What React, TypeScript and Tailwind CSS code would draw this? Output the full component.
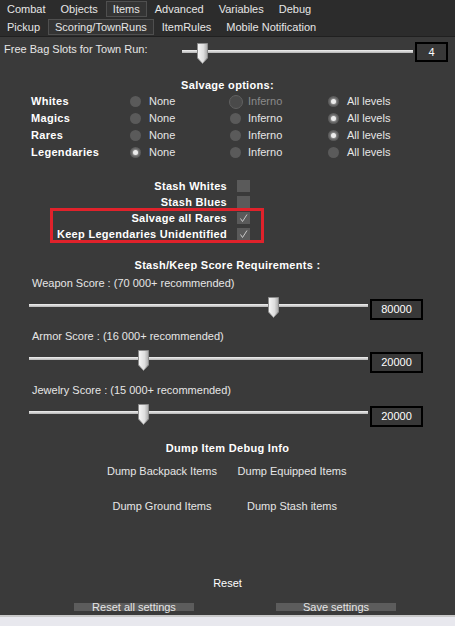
import React from 'react';

const topTabs = ['Combat', 'Objects', 'Items', 'Advanced', 'Variables', 'Debug'];
const subTabs = ['Pickup', 'Scoring/TownRuns', 'ItemRules', 'Mobile Notification'];

const salvageRows = [
    { label: 'Whites', picked: 2, inferno: 'disabled' },
    { label: 'Magics', picked: 2 },
    { label: 'Rares', picked: 2 },
    { label: 'Legendaries', picked: 0 },
];

const Tab = ({ label, active }: { label: string; active?: boolean }) => (
    <div
        className={`flex h-[16px] items-center border px-[6px] ${
            active ? 'border-[#4f4f4f] bg-[#343434]' : 'border-transparent'
        }`}
    >
        {label}
    </div>
);

const Radio = ({ checked, disabled }: { checked?: boolean; disabled?: boolean }) => (
    <div className="flex w-[11px] shrink-0 items-center justify-center">
        {disabled ? (
            <span className="block h-[14px] w-[14px] shrink-0 rounded-full border border-[#606060] bg-[#4a4a4a]" />
        ) : (
            <span className="flex h-[11px] w-[11px] shrink-0 items-center justify-center rounded-full bg-[#5a5a5a]">
                {checked && (
                    <span className="block h-[5px] w-[5px] rounded-full bg-[#ececec] shadow-[0_0_2px_1px_#9a9a9a]" />
                )}
            </span>
        )}
    </div>
);

const Checkbox = ({ checked }: { checked?: boolean }) => (
    <div className="ml-[10px] h-[12px] w-[13px] bg-[#5a5a5a]">
        {checked && (
            <svg width="13" height="12" viewBox="0 0 13 12">
                <path d="M3.5 6.5 L5.5 9.5 L10 2.5" fill="none" stroke="#c8c8c8" strokeWidth="1" />
            </svg>
        )}
    </div>
);

const Thumb = ({ id }: { id: string }) => (
    <svg width="11" height="21" viewBox="0 0 11 21">
        <defs>
            <linearGradient id={id} x1="0" x2="1" y1="0" y2="0">
                <stop offset="0" stopColor="#f6f6f6" />
                <stop offset="0.6" stopColor="#dedede" />
                <stop offset="1" stopColor="#a9a9a9" />
            </linearGradient>
        </defs>
        <path d="M0.5 0.5 H10.5 V15 L5.5 20.5 L0.5 15 Z" fill={`url(#${id})`} stroke="#8c8c8c" />
    </svg>
);

const Track = ({ id, thumb }: { id: string; thumb: number }) => (
    <div className="relative flex h-[21px] w-full flex-col">
        <div className="mt-[7px] h-[3px] w-full bg-gradient-to-b from-[#f2f2f2] to-[#b4b4b4]" />
        <div className="absolute top-0" style={{ left: thumb }}>
            <Thumb id={id} />
        </div>
    </div>
);

const ScoreSlider = ({ id, label, thumb, value }: { id: string; label: string; thumb: number; value: string }) => (
    <>
        <div className="flex h-[16px] items-center pl-[32px]">{label}</div>
        <div className="mt-[5px] flex h-[25px] items-start pl-[29px]">
            <div className="mt-[1px] w-[339px]">
                <Track id={id} thumb={thumb} />
            </div>
            <div className="ml-[2px] mt-[3px] flex h-[21px] w-[53px] items-center justify-center border-2 border-black bg-[#383838] text-white">
                {value}
            </div>
        </div>
    </>
);

const App = () => {
    return (
        <div className="flex h-[626px] w-[455px] flex-col bg-[#3a3a3a] font-['Liberation_Sans',Arial,sans-serif] text-[11px] text-[#e6e6e6]">
            <div className="bg-[#2c2c2c]">
                <div className="flex h-[18px] items-center gap-[1px]">
                    {topTabs.map((t) => (
                        <Tab key={t} label={t} active={t === 'Items'} />
                    ))}
                </div>
                <div className="flex h-[19px] items-center gap-[1px] border-b border-[#202020]">
                    {subTabs.map((t) => (
                        <Tab key={t} label={t} active={t === 'Scoring/TownRuns'} />
                    ))}
                </div>
            </div>

            <div className="flex flex-1 flex-col">
                <div className="mt-[2px] flex h-[28px] items-start">
                    <div className="mt-[4px] w-[182px] pl-[4px] leading-[13px]">Free Bag Slots for Town Run:</div>
                    <div className="mt-[4px] w-[231px]">
                        <Track id="bag" thumb={15} />
                    </div>
                    <div className="ml-[2px] mt-[3px] flex h-[20px] w-[33px] items-center justify-center border-2 border-black bg-[#383838] text-white">
                        4
                    </div>
                </div>

                <div className="mt-[10px] flex h-[16px] items-center justify-center font-bold tracking-[0.3px] text-white">
                    Salvage options:
                </div>
                {salvageRows.map((r) => (
                    <div key={r.label} className="flex h-[17px] items-center">
                        <div className="w-[130px] pl-[31px] font-bold tracking-[0.3px] text-white">{r.label}</div>
                        <div className="flex w-[100px] items-center">
                            <Radio checked={r.picked === 0} />
                            <span className="ml-[8px]">None</span>
                        </div>
                        <div className="flex w-[98px] items-center">
                            <Radio checked={r.picked === 1} disabled={r.inferno === 'disabled'} />
                            <span className={`ml-[7px] ${r.inferno === 'disabled' ? 'text-[#8a8a8a]' : ''}`}>Inferno</span>
                        </div>
                        <div className="flex items-center">
                            <Radio checked={r.picked === 2} />
                            <span className="ml-[8px]">All levels</span>
                        </div>
                    </div>
                ))}

                <div className="relative mt-[17px]">
                    {[
                        ['Stash Whites', false],
                        ['Stash Blues', false],
                        ['Salvage all Rares', true],
                        ['Keep Legendaries Unidentified', true],
                    ].map(([label, checked]) => (
                        <div key={label as string} className="flex h-[16px] items-center">
                            <div className="w-[227px] text-right font-bold tracking-[0.3px] text-white">{label}</div>
                            <Checkbox checked={checked as boolean} />
                        </div>
                    ))}
                    <div className="absolute left-[50px] top-[30px] h-[35px] w-[214px] border-[3px] border-[#e0222b]" />
                </div>

                <div className="mt-[15px] flex h-[16px] items-center justify-center font-bold tracking-[0.3px] text-white">
                    Stash/Keep Score Requirements :
                </div>
                <div className="mt-[2px]">
                    <ScoreSlider id="weapon" label="Weapon Score : (70 000+ recommended)" thumb={239} value="80000" />
                </div>
                <div className="mt-[7px]">
                    <ScoreSlider id="armor" label="Armor Score : (16 000+ recommended)" thumb={109} value="20000" />
                </div>
                <div className="mt-[8px]">
                    <ScoreSlider id="jewelry" label="Jewelry Score : (15 000+ recommended)" thumb={109} value="20000" />
                </div>

                <div className="mt-[12px] flex h-[16px] items-center justify-center font-bold tracking-[0.3px] text-white">
                    Dump Item Debug Info
                </div>
                <div className="ml-[102px] mt-[7px] grid h-[16px] grid-cols-[120px_120px] items-center gap-x-[10px] text-center">
                    <div>Dump Backpack Items</div>
                    <div>Dump Equipped Items</div>
                </div>
                <div className="ml-[102px] mt-[19px] grid h-[16px] grid-cols-[120px_120px] items-center gap-x-[10px] text-center">
                    <div>Dump Ground Items</div>
                    <div>Dump Stash items</div>
                </div>

                <div className="mt-[61px] flex h-[16px] items-center justify-center text-white">Reset</div>
                <div className="mt-[8px] flex h-[16px] items-center pl-[74px]">
                    <div className="flex h-[8px] w-[120px] items-center justify-center bg-[#5c5c5c]">
                        <span className="leading-none">Reset all settings</span>
                    </div>
                    <div className="ml-[82px] flex h-[8px] w-[120px] items-center justify-center bg-[#5c5c5c]">
                        <span className="leading-none">Save settings</span>
                    </div>
                </div>
            </div>

            <div className="h-[11px] border-t-2 border-[#c8c8c8] bg-[#e8e8ee]" />
        </div>
    );
};

export default App;
